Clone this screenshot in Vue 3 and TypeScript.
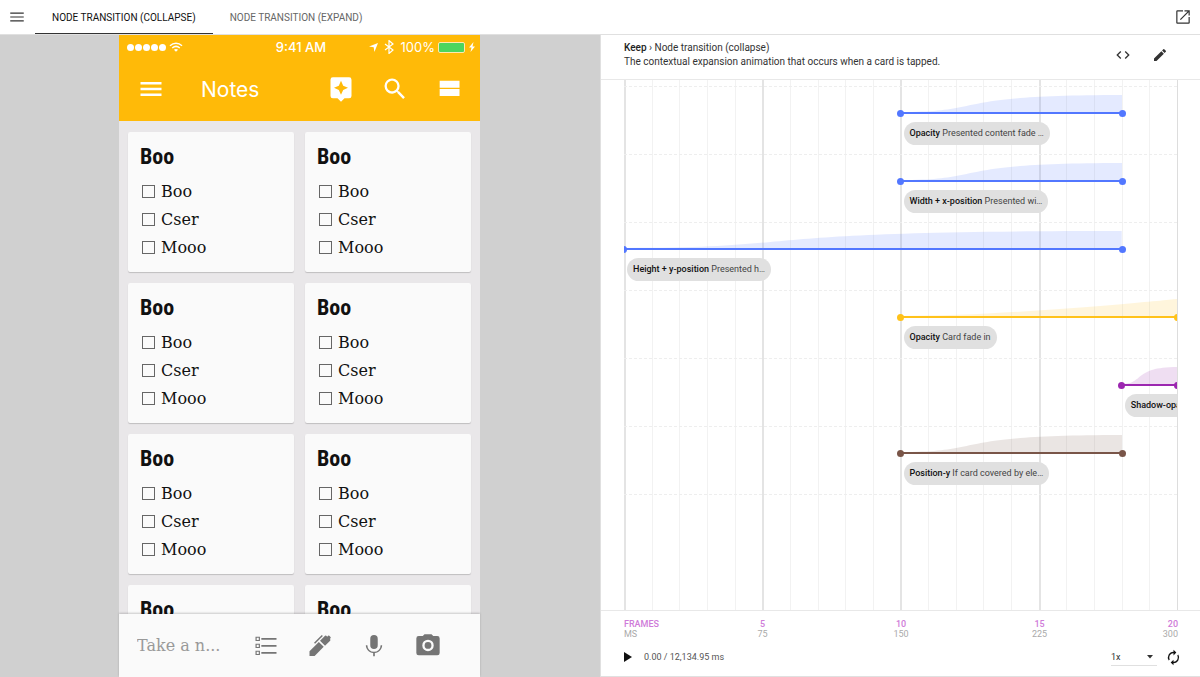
<script setup lang="ts">
import { ref } from 'vue'

interface Track {
  from: number
  to: number
  tone: string
  ease: 'standard' | 'accelerate'
  name: string
  detail: string
}

const tabs = ['Node transition (collapse)', 'Node transition (expand)']
const activeTab = ref(0)
const speed = ref('1x')

const notes = Array.from({ length: 8 }, (_, id) => ({
  id,
  title: 'Boo',
  items: id < 6 ? ['Boo', 'Cser', 'Mooo'] : [],
}))

const curves = {
  standard: 'M0 100C40 100 20 0 100 0V100Z',
  accelerate: 'M0 100C40 100 100 0 100 0V100Z',
}

const tracks: Track[] = [
  { from: 10, to: 18, tone: 'blue', ease: 'standard', name: 'Opacity', detail: 'Presented content fade …' },
  { from: 10, to: 18, tone: 'blue', ease: 'standard', name: 'Width + x-position', detail: 'Presented wi…' },
  { from: 0, to: 18, tone: 'blue', ease: 'standard', name: 'Height + y-position', detail: 'Presented h…' },
  { from: 10, to: 20, tone: 'amber', ease: 'accelerate', name: 'Opacity', detail: 'Card fade in' },
  { from: 18, to: 20, tone: 'purple', ease: 'standard', name: 'Shadow-opacity', detail: 'Card' },
  { from: 10, to: 18, tone: 'brown', ease: 'standard', name: 'Position-y', detail: 'If card covered by ele…' },
]

const ticks = [
  { frame: 'FRAMES', ms: 'MS' },
  { frame: '5', ms: '75' },
  { frame: '10', ms: '150' },
  { frame: '15', ms: '225' },
  { frame: '20', ms: '300' },
]
</script>

<template>
  <div class="app">
    <header class="topbar">
      <button class="icon-btn menu" aria-label="Menu">
        <svg viewBox="0 0 24 24"><path d="M3 18h18v-1.6H3zm0-5.2h18v-1.6H3zM3 6v1.6h18V6z" /></svg>
      </button>
      <nav class="tabs" role="tablist">
        <button
          v-for="(tab, i) in tabs"
          :key="tab"
          role="tab"
          class="tab"
          :class="{ active: i === activeTab }"
          :aria-selected="i === activeTab"
          @click="activeTab = i"
        >{{ tab }}</button>
      </nav>
      <button class="icon-btn open" aria-label="Open in new window">
        <svg viewBox="0 0 24 24"><path d="M19.4 19.4H4.6V4.6H12V3H4.5A1.5 1.5 0 0 0 3 4.5v15A1.5 1.5 0 0 0 4.5 21h15a1.5 1.5 0 0 0 1.5-1.5V12h-1.6v7.4zM14 3v1.6h4.2L7.9 14.9l1.2 1.2L19.4 5.8V10H21V3h-7z" /></svg>
      </button>
    </header>

    <main class="workspace">
      <section class="stage">
        <div class="phone">
          <div class="phone-head">
            <div class="status">
              <div class="signal">
                <i v-for="n in 5" :key="n" class="dot"></i>
                <svg class="wifi" viewBox="0 0 14 10"><path d="M1 3.8C4.5.5 9.5.5 13 3.8M3.2 6C5.5 4 8.5 4 10.8 6" fill="none" stroke="currentColor" stroke-width="1.5" /><path d="M7 9.8L4.9 7.7Q7 6.1 9.1 7.7z" /></svg>
              </div>
              <span class="clock">9:41 AM</span>
              <div class="power">
                <svg class="locate" viewBox="0 0 10 10"><path d="M10 0L6 10 5.2 4.8 0 4z" /></svg>
                <svg class="bluetooth" viewBox="0 0 10 14"><path d="M1 4l8 6-4 3.500V.5L9 4 1 10" fill="none" stroke="currentColor" stroke-width="1.2" /></svg>
                <span class="percent">100%</span>
                <i class="battery"></i>
                <svg class="bolt" viewBox="0 0 6 10"><path d="M4.5 0L0 5.6h2.5L1.5 10 6 4.4H3.5z" /></svg>
              </div>
            </div>
            <div class="toolbar">
              <button class="icon-btn" aria-label="Open menu">
                <svg viewBox="0 0 24 24"><path d="M3 18h18v-2.200H3zm0-4.900h18v-2.200H3zM3 6v2.200h18V6z" /></svg>
              </button>
              <h1>Notes</h1>
              <button class="icon-btn" aria-label="Assistant">
                <svg viewBox="0 0 24 24"><path d="M19 2H5a2 2 0 0 0-2 2v14a2 2 0 0 0 2 2h4l3 3 3-3h4a2 2 0 0 0 2-2V4a2 2 0 0 0-2-2zm-5.120 10.880L12 17l-1.880-4.120L6 11l4.120-1.880L12 5l1.880 4.120L18 11l-4.120 1.880z" /></svg>
              </button>
              <button class="icon-btn" aria-label="Search">
                <svg viewBox="0 0 24 24"><path d="M15.500 14h-.79l-.28-.27A6.470 6.470 0 0 0 16 9.500 6.500 6.500 0 1 0 9.500 16c1.610 0 3.090-.59 4.230-1.570l.27.28v.79l5 4.990L20.490 19l-4.990-5zm-6 0C7.010 14 5 11.990 5 9.500S7.010 5 9.500 5 14 7.010 14 9.500 11.990 14 9.500 14z" /></svg>
              </button>
              <button class="icon-btn" aria-label="Change view">
                <svg viewBox="0 0 24 24"><path d="M4 5h17v6H4zM4 12h17v6H4z" /></svg>
              </button>
            </div>
          </div>

          <div class="notes">
            <article v-for="note in notes" :key="note.id" class="note">
              <h2>{{ note.title }}</h2>
              <label v-for="item in note.items" :key="item">
                <input type="checkbox" />
                <span>{{ item }}</span>
              </label>
            </article>
          </div>

          <div class="composer">
            <input type="text" placeholder="Take a n..." aria-label="Take a note" />
            <button class="icon-btn" aria-label="New list">
              <svg viewBox="0 0 24 24"><path d="M3.500 4.500h2.800v2.800H3.500zM3.500 10.500h2.800v2.800H3.500zM3.500 16.500h2.800v2.800H3.500z" fill="none" stroke="currentColor" /><path d="M8 5.100H21v1.600H8zM8 11.100H21v1.600H8zM8 17.100H21v1.600H8z" /></svg>
            </button>
            <button class="icon-btn" aria-label="New drawing">
              <svg viewBox="0 0 24 24"><path d="M3 20.500v-4l8-8 4.200 4.200-7.800 7.800zM12 7.500l4.300-4.300a.8.8 0 0 1 1.100 0l.8.8.7-.7a.8.8 0 0 1 1.100 0l1 1a.8.8 0 0 1 0 1.100l-.6.6.3.3a.8.8 0 0 1 0 1.100l-4.400 4.300z" /><path d="M7.300 9.600L14 3" fill="none" stroke="currentColor" stroke-width="1.300" /></svg>
            </button>
            <button class="icon-btn" aria-label="Voice note">
              <svg viewBox="0 0 24 24"><path d="M12 14.500a3.200 3.200 0 0 0 3.200-3.200V5.700a3.200 3.200 0 0 0-6.400 0v5.600a3.200 3.200 0 0 0 3.200 3.200zm5.700-3.200a5.700 5.700 0 0 1-11.400 0H5c0 3.400 2.800 6.200 6.300 6.700v2.800h1.400V18c3.500-.5 6.300-3.300 6.300-6.700h-1.300z" /></svg>
            </button>
            <button class="icon-btn" aria-label="Photo note">
              <svg viewBox="0 0 24 24"><circle cx="12" cy="11.500" r="2.900" /><path d="M9 2L7.500 3.500H4a2 2 0 0 0-2 2v12.500a2 2 0 0 0 2 2h16a2 2 0 0 0 2-2V5.500a2 2 0 0 0-2-2h-3.500L15 2H9zm3 14.400a4.900 4.900 0 1 1 0-9.800 4.900 4.900 0 0 1 0 9.800z" /></svg>
            </button>
          </div>
        </div>
      </section>

      <section class="panel">
        <header class="panel-head">
          <div class="summary">
            <p><strong>Keep</strong> › Node transition (collapse)</p>
            <p>The contextual expansion animation that occurs when a card is tapped.</p>
          </div>
          <button class="icon-btn" aria-label="View code">
            <svg viewBox="0 0 24 24"><path d="M9.400 16.600L4.800 12l4.600-4.600L8 6l-6 6 6 6 1.400-1.400zm5.200 0l4.600-4.600-4.600-4.600L16 6l6 6-6 6-1.400-1.400z" /></svg>
          </button>
          <button class="icon-btn" aria-label="Edit">
            <svg viewBox="0 0 24 24"><path d="M3 17.250V21h3.750L17.810 9.940l-3.750-3.750L3 17.250zM20.710 7.040a1 1 0 0 0 0-1.410l-2.340-2.340a1 1 0 0 0-1.410 0l-1.830 1.830 3.750 3.750 1.830-1.830z" /></svg>
          </button>
        </header>

        <div class="timeline">
          <div class="frames" aria-hidden="true">
            <i v-for="n in 20" :key="n" :class="{ major: n % 5 === 1 }"></i>
          </div>
          <div class="tracks">
            <div v-for="(track, i) in tracks" :key="i" class="track">
              <div class="span" :class="track.tone" :style="{ gridColumn: `${track.from + 1} / ${track.to + 1}` }">
                <svg class="curve" viewBox="0 0 100 100" preserveAspectRatio="none"><path :d="curves[track.ease]" /></svg>
                <div class="line"></div>
                <div class="chip"><strong>{{ track.name }}</strong> {{ track.detail }}</div>
              </div>
            </div>
          </div>
        </div>

        <footer class="panel-foot">
          <div class="axis">
            <div v-for="tick in ticks" :key="tick.frame">
              <b>{{ tick.frame }}</b>
              <span>{{ tick.ms }}</span>
            </div>
          </div>
          <div class="controls">
            <button class="icon-btn play" aria-label="Play">
              <svg viewBox="0 0 8 10"><path d="M0 0l8 5-8 5z" /></svg>
            </button>
            <span class="time">0.00 / 12,134.95 ms</span>
            <div class="speed">
              <select v-model="speed" aria-label="Playback speed">
                <option>1x</option>
              </select>
              <svg viewBox="0 0 6 4"><path d="M0 0h6L3 3.500z" /></svg>
            </div>
            <button class="icon-btn loop" aria-label="Loop">
              <svg viewBox="0 0 24 24"><path d="M12 6v3l4-4-4-4v3a8 8 0 0 0-6.760 12.260L6.700 14.800A5.870 5.870 0 0 1 6 12c0-3.310 2.690-6 6-6zm6.760 1.740L17.300 9.200c.44.84.7 1.790.7 2.800 0 3.310-2.690 6-6 6v-3l-4 4 4 4v-3a8 8 0 0 0 6.760-12.260z" /></svg>
            </button>
          </div>
        </footer>
      </section>
    </main>
  </div>
</template>

<style>
body {
  margin: 0;
}
</style>

<style scoped>
* {
  box-sizing: border-box;
}

.app {
  display: flex;
  flex-direction: column;
  height: 100vh;
  background: #fff;
  color: #333;
  font-family: Roboto, "Liberation Sans", sans-serif;
}

button,
input,
select {
  margin: 0;
  padding: 0;
  border: 0;
  background: none;
  color: inherit;
  font: inherit;
}

svg {
  display: block;
  fill: currentColor;
}

.icon-btn {
  display: flex;
  flex: none;
  align-items: center;
  justify-content: center;
}

.topbar {
  display: flex;
  flex: none;
  align-items: center;
  height: 35px;
  padding-right: 8px;
  border-bottom: 1px solid #e0e0e0;
}

.menu {
  width: 35px;
  padding-right: 2px;
}

.menu svg,
.open svg {
  width: 18px;
}

.tabs {
  display: flex;
  flex: 1;
  align-self: stretch;
}

.tab {
  padding: 1px 17px 0;
  border-bottom: 1px solid transparent;
  color: #666;
  font-size: 10px;
  text-transform: uppercase;
}

.tab.active {
  border-bottom-color: #333;
  color: #111;
}

.workspace {
  display: grid;
  flex: 1;
  grid-template-columns: 1fr 1fr;
  min-height: 0;
}

.stage {
  display: flex;
  justify-content: center;
  min-height: 0;
  padding-right: 1px;
  background: #d0d0d0;
}

.phone {
  display: flex;
  flex-direction: column;
  width: 361px;
  min-height: 0;
  background: #e9e7e9;
}

.phone-head {
  flex: none;
  background: #ffba08;
  color: #fff;
  font-family: Inter, "Liberation Sans", sans-serif;
}

.status {
  display: grid;
  grid-template-columns: 1fr auto 1fr;
  align-items: center;
  height: 24px;
  padding: 0 5px 0 8px;
  font-size: 13px;
}

.signal,
.power {
  display: flex;
  align-items: center;
}

.power {
  justify-content: flex-end;
}

.dot {
  width: 7px;
  height: 7px;
  margin-right: 1px;
  border-radius: 50%;
  background: currentColor;
}

.wifi {
  width: 14px;
  margin-left: 2px;
}

.clock {
  font-weight: 500;
}

.locate {
  width: 9px;
  margin-right: 6px;
}

.bluetooth {
  width: 10px;
  margin-right: 7px;
}

.battery {
  width: 27px;
  height: 11px;
  margin: 0 4px 0 3px;
  border: 1px solid #ffe9b0;
  border-radius: 2px;
  background: #4cd55f;
}

.bolt {
  width: 6px;
}

.toolbar {
  display: flex;
  align-items: center;
  gap: 26px;
  height: 62px;
  padding: 0 17px 2px 18px;
}

.toolbar svg,
.composer svg {
  width: 28px;
}

h1 {
  flex: 1;
  margin: 0;
  padding-left: 10px;
  font-size: 21px;
  font-weight: 400;
}

.notes {
  display: grid;
  flex: 1;
  grid-template-columns: 1fr 1fr;
  align-content: start;
  gap: 11px;
  min-height: 0;
  padding: 11px 9px;
  overflow: hidden;
}

.note {
  height: 140px;
  padding: 11px 12px;
  border-radius: 2px;
  background: #fafafa;
  box-shadow: 0 1px 1px rgba(0, 0, 0, 0.18);
  color: #111;
}

h2 {
  margin: 0 0 6px;
  font-family: "Roboto Condensed", "Liberation Sans Narrow", Roboto, sans-serif;
  font-size: 22px;
  font-weight: 700;
  line-height: 28px;
}

.note label {
  display: flex;
  align-items: center;
  gap: 6px;
  height: 28px;
  padding-left: 2px;
  font-family: "Roboto Slab", "DejaVu Serif", serif;
  font-size: 16px;
}

.note input {
  width: 13px;
  height: 13px;
  border: 1px solid #666;
  appearance: none;
}

.composer {
  display: flex;
  z-index: 1;
  flex: none;
  align-items: center;
  gap: 26px;
  height: 63px;
  padding: 0 38px 0 18px;
  background: #fafafa;
  box-shadow: 0 -1px 2px rgba(0, 0, 0, 0.2);
  color: #757575;
}

.composer input {
  flex: 1;
  min-width: 0;
  font-family: "Roboto Slab", "DejaVu Serif", serif;
  font-size: 16px;
}

.composer input::placeholder {
  color: #999;
  opacity: 1;
}

.panel {
  display: flex;
  flex-direction: column;
  min-width: 0;
  border-bottom: 1px solid #e0e0e0;
  border-left: 1px solid #e0e0e0;
}

.panel-head {
  display: flex;
  flex: none;
  align-items: center;
  gap: 21px;
  height: 45px;
  padding: 0 32px 5px 23px;
  border-bottom: 1px solid #e8e8e8;
}

.summary {
  flex: 1;
  font-size: 10px;
  line-height: 14px;
}

.summary p {
  margin: 0;
}

strong {
  color: #222;
  font-weight: 500;
}

.panel-head svg {
  width: 16px;
}

.timeline {
  display: grid;
  flex: 1;
  min-height: 0;
  margin: 0 22px 0 23px;
  overflow: hidden;
  border-right: 1px solid #ddd;
}

.frames,
.tracks {
  grid-area: 1 / 1;
}

.frames {
  display: grid;
  grid-template-columns: repeat(20, 1fr);
}

.frames i {
  border-left: 1px solid #f2f2f2;
}

.frames i.major {
  border-left: 2px solid #e4e4e4;
}

.tracks {
  z-index: 1;
  min-width: 0;
  padding-top: 6px;
}

.track {
  display: grid;
  grid-template-columns: repeat(20, minmax(0, 1fr));
  height: 68px;
  padding-top: 8px;
  border-top: 1px dashed #eee;
}

.track:last-child {
  height: 69px;
  border-bottom: 1px dashed #eee;
}

.span {
  min-width: 0;
}

.curve {
  width: 100%;
  height: 17px;
  opacity: 0.15;
}

.line {
  display: flex;
  align-items: center;
  justify-content: space-between;
  height: 2px;
  margin: 0 -4px;
  background: linear-gradient(currentColor, currentColor) center / calc(100% - 8px) 100% no-repeat;
}

.line::before,
.line::after {
  flex: none;
  width: 7px;
  height: 7px;
  border-radius: 50%;
  background: currentColor;
  content: "";
}

.blue {
  color: #5277ff;
}

.amber {
  color: #ffc21a;
}

.purple {
  color: #9c27b0;
}

.brown {
  color: #795548;
}

.chip {
  width: max-content;
  height: 23px;
  margin: 8px 0 0 3px;
  padding: 0 6px;
  border-radius: 12px;
  background: #e0e0e0;
  color: #444;
  font-size: 9px;
  line-height: 23px;
  white-space: nowrap;
}

.chip strong {
  color: #111;
}

.panel-foot {
  flex: none;
  padding: 0 18px 0 23px;
  border-top: 1px solid #e8e8e8;
}

.axis {
  display: grid;
  grid-template-columns: 1fr 2fr 2fr 2fr 1fr;
  padding: 8px 4px 0 0;
  color: #aaa;
  font-size: 9px;
  line-height: 10px;
  text-align: center;
}

.axis div:first-child {
  text-align: left;
}

.axis div:last-child {
  text-align: right;
}

.axis b,
.axis span {
  display: block;
}

.axis b {
  color: #cf7bd9;
  font-weight: 500;
}

.controls {
  display: flex;
  align-items: center;
  height: 37px;
  padding-bottom: 1px;
}

.play svg {
  width: 8px;
}

.play,
.loop {
  color: #111;
}

.time {
  flex: 1;
  padding-left: 12px;
  color: #555;
  font-size: 9px;
}

.speed {
  display: flex;
  align-items: center;
  width: 46px;
  height: 18px;
  margin-right: 8px;
  padding-right: 4px;
  border-bottom: 1px solid #e0e0e0;
}

.speed select {
  flex: 1;
  min-width: 0;
  appearance: none;
  font-size: 9px;
}

.speed svg {
  width: 6px;
}

.loop svg {
  width: 17px;
}
</style>
